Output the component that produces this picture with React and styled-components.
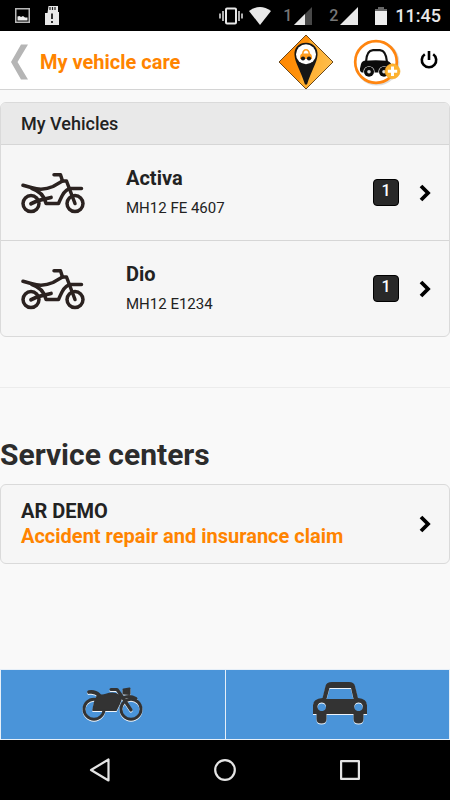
import React from "react";
import styled, { createGlobalStyle } from "styled-components";

const GlobalStyle = createGlobalStyle`
  *, *::before, *::after { box-sizing: border-box; }
  body {
    margin: 0;
    background: #f9f9f9;
    color: #222;
    font-family: Roboto, "Liberation Sans", sans-serif;
  }
  h1, h2, h3, p, ul { margin: 0; padding: 0; }
  button { border: 0; padding: 0; margin: 0; background: none; font: inherit; color: inherit; cursor: pointer; }
  a { color: inherit; text-decoration: none; }
  svg { display: block; flex: none; }
`;

const Screen = styled.div`
  display: flex;
  flex-direction: column;
  min-height: 100vh;
`;

const StatusBar = styled.div`
  display: flex;
  align-items: center;
  height: 31px;
  padding: 0 9px 0 15px;
  background: #000;
  color: #e8e8e8;
`;

const Notices = styled.div`
  display: flex;
  align-items: center;
  gap: 15px;
  margin-right: auto;
`;

const SystemIcons = styled.div`
  display: flex;
  align-items: center;
  gap: 6px;
`;

const Sim = styled.span`
  display: flex;
  align-items: center;
  gap: 2px;
  margin-left: 6px;
  margin-right: 5px;
  color: #777;
  font-size: 16px;
  line-height: 20px;
  font-weight: 500;
`;

const Battery = styled.span`
  margin-left: 6px;
`;

const Clock = styled.time`
  margin-left: 2px;
  font-size: 18px;
  line-height: 24px;
  font-weight: 500;
`;

const Header = styled.header`
  display: flex;
  align-items: center;
  height: 59px;
  padding: 3px 12px 0 10px;
  background: #fff;
  border-bottom: 1px solid #d4d4d4;
`;

const Title = styled.h1`
  margin: 0 auto 0 12px;
  color: #ff8400;
  font-size: 20px;
  line-height: 26px;
  font-weight: 700;
`;

const HeaderActions = styled.div`
  display: flex;
  align-items: center;
  gap: 19px;
`;

const Main = styled.main`
  flex: 1;
  padding-top: 12px;
`;

const Card = styled.section`
  overflow: hidden;
  border: 1px solid #dadada;
  border-radius: 6px;
  background: #f6f6f6;
`;

const CardTitle = styled.h2`
  padding: 0 20px;
  background: #e9e9e9;
  font-size: 18px;
  line-height: 41px;
  font-weight: 500;
`;

const VehicleList = styled.ul`
  list-style: none;
`;

const VehicleLink = styled.a`
  display: flex;
  align-items: center;
  height: 96px;
  padding: 0 18px 0 20px;
  border-top: 1px solid #d6d6d6;
`;

const VehicleText = styled.div`
  flex: 1;
  margin-left: 41px;
`;

const Name = styled.h3`
  font-size: 20px;
  line-height: 25px;
  font-weight: 700;
`;

const Plate = styled.p`
  margin-top: 6px;
  font-size: 15px;
  line-height: 22px;
  font-weight: 400;
  color: #222;
`;

const Count = styled.span`
  width: 26px;
  height: 27px;
  margin-right: 20px;
  border: 1px solid #000;
  border-radius: 4px;
  background: #292929;
  color: #fff;
  font-size: 16px;
  line-height: 22px;
  font-weight: 500;
  text-align: center;
`;

const Divider = styled.hr`
  margin: 50px 0;
  border: 0;
  border-top: 1px solid #ececec;
`;

const SectionTitle = styled.h2`
  margin-bottom: 12px;
  color: #2c2c2c;
  font-size: 30px;
  line-height: 34px;
  font-weight: 700;
`;

const CenterLink = styled.a`
  display: flex;
  align-items: center;
  justify-content: space-between;
  min-height: 78px;
  padding: 14px 18px 14px 20px;
`;

const CenterDetail = styled.p`
  color: #ff8400;
  font-size: 20px;
  line-height: 25px;
  font-weight: 700;
`;

const Tabs = styled.nav`
  display: grid;
  grid-template-columns: 1fr 1fr;
  gap: 1px;
  height: 71px;
  padding: 1px;
  background: #e6eff8;
`;

const Tab = styled.button`
  display: flex;
  align-items: center;
  justify-content: center;
  background: #4a94d9;

  svg { filter: drop-shadow(0 1px 0 #eef4fa); }
`;

const SystemNav = styled.nav`
  display: grid;
  grid-template-columns: repeat(3, 125px);
  justify-content: center;
  height: 60px;
  background: #000;
`;

const NavButton = styled.button`
  display: flex;
  align-items: center;
  justify-content: center;
`;

const Signal = ({ weak }) => (
  <svg width="18" height="18" viewBox="0 0 18 18" aria-hidden="true">
    <path d="M18 0V18H0Z" fill={weak ? "#484848" : "#e8e8e8"} />
    {weak && <path d="M11 7V18H0Z" fill="#e8e8e8" />}
  </svg>
);

const DirtBike = () => (
  <svg width="64" height="42" viewBox="0 0 64 42" fill="none" stroke="#2b2220" strokeWidth="3.5" strokeLinecap="round" strokeLinejoin="round" aria-hidden="true">
    <circle cx="10" cy="31.6" r="8" />
    <circle cx="54" cy="31.6" r="8" />
    <path d="M33 2.7H39.5L41.5 9L32 14.5Q22 19 11 15.8L2 13.2" />
    <path d="M41 9H45.5L54 31.5" />
    <path d="M11 16.5Q23 20.5 25 31.5H37.5Q39 28 41 24Q45 16.8 50 16.6L60.5 16.6" />
    <path d="M10 31.8L17 28.6L30 25.5" strokeWidth="3.8" />
  </svg>
);

const Motorcycle = () => (
  <svg width="61" height="35" viewBox="0 0 61 35" fill="none" stroke="#333" strokeWidth="3.2" strokeLinecap="round" strokeLinejoin="round" aria-hidden="true">
    <circle cx="12" cy="22.2" r="10" strokeWidth="2.9" />
    <circle cx="49" cy="22.2" r="10" strokeWidth="2.9" />
    <path d="M7 5Q13 4 17 8" strokeWidth="3.8" />
    <path d="M16 7.5Q20 9 24 7.5Q30 5.5 34 7L40 9.5Q38 16 34 23.3H11Q12 15 16 7.5Z" fill="#333" strokeWidth="1.6" />
    <path d="M29 2.5H35L39 8L49 23" />
    <path d="M41.5 2.5L47.5 1.5V7L41.5 6.5Z" fill="#333" strokeWidth="2" />
    <path d="M42 10.5Q48 8 54 11.5" strokeWidth="3" />
  </svg>
);

const CarFront = () => (
  <svg width="59" height="47" viewBox="-5 0 59 47" aria-hidden="true">
    <path
      fill="#333"
      fillRule="evenodd"
      d="M19 1H36Q41 1 42 5L45 17Q54 18 54 24V33H50.5V38Q50.5 42.5 45.5 42.5Q40.5 42.5 40.5 38V33H13.5V38Q13.5 42.5 8.5 42.5Q3.5 42.5 3.5 38V33H0V24Q0 18 9.5 17L12.5 5Q13.5 1 19 1ZM16.5 7L13.5 18H40.5L38 7ZM8.7 21.5a4.3 4.3 0 1 0 .1 0ZM45.5 21.5a4.3 4.3 0 1 0 .1 0Z"
    />
  </svg>
);

const SignPin = () => (
  <svg width="56" height="56" viewBox="0 0 56 56" aria-hidden="true">
    <defs>
      <linearGradient id="sign" x1="0" y1="0" x2="1" y2="0.25">
        <stop offset="0" stopColor="#ff8500" />
        <stop offset="0.54" stopColor="#ff920c" />
        <stop offset="0.58" stopColor="#ffac2c" />
        <stop offset="1" stopColor="#ffbc48" />
      </linearGradient>
    </defs>
    <path d="M28 1L55 28L28 55L1 28Z" fill="url(#sign)" stroke="#6b481c" strokeWidth="1" strokeLinejoin="round" />
    <path d="M28 8.8C36 8.8 40 14.5 39.5 21C39 29 33.5 36 29 50.5H27C22.5 36 17 29 16.5 21C16 14.5 20 8.8 28 8.8Z" fill="#161616" />
    <circle cx="28" cy="20.3" r="10" fill="#fff" />
    <path d="M22 23Q22 20 24 19.5Q24.5 15 28 15Q31.5 15 32 19.5Q34 20 34 23V25H22Z" fill="#ff9c1c" />
    <path d="M25.5 19.5Q26 16.5 28 16.5Q30 16.5 30.5 19.5Z" fill="#fff" />
    <circle cx="25" cy="24.5" r="2.1" fill="#161616" />
    <circle cx="31" cy="24.5" r="2.1" fill="#161616" />
  </svg>
);

const AddCar = () => (
  <svg width="48" height="48" viewBox="0 0 48 48" aria-hidden="true">
    <circle cx="24" cy="25" r="21" fill="none" stroke="#ddd" strokeWidth="3" />
    <circle cx="23" cy="24" r="20.8" fill="#fff" stroke="#ff850f" strokeWidth="2.7" />
    <path d="M13 24Q13.5 12.5 20 12.2H27Q33 12.5 34 24" fill="none" stroke="#111" strokeWidth="2.2" />
    <path d="M11 22.8Q23 21.8 34 22.8Q39 24.5 39 29V34.5H9Q6.5 33.5 7 30.5L8 26Q8.5 23.5 11 22.8Z" fill="#0b0b0b" />
    <circle cx="16" cy="33.8" r="5.6" fill="#fff" />
    <circle cx="16" cy="33.8" r="5" fill="#0b0b0b" />
    <circle cx="16" cy="33.8" r="1.8" fill="#ddd" />
    <circle cx="31" cy="33.8" r="5.6" fill="#fff" />
    <circle cx="31" cy="33.8" r="5" fill="#0b0b0b" />
    <circle cx="31" cy="33.8" r="1.8" fill="#ddd" />
    <circle cx="39.5" cy="33.3" r="7.5" fill="#fdb22e" stroke="#f5a623" strokeWidth="0.6" />
    <path d="M39.5 28.5V38M34.8 33.3H44.2" stroke="#fff" strokeWidth="3" />
  </svg>
);

const Chevron = () => (
  <svg width="12" height="18" viewBox="0 0 12 18" fill="none" stroke="#000" strokeWidth="3.8" aria-hidden="true">
    <path d="M2 2L9 9L2 16" />
  </svg>
);

const vehicles = [
  { name: "Activa", plate: "MH12 FE 4607", count: 1 },
  { name: "Dio", plate: "MH12 E1234", count: 1 },
];

export default function App() {
  return (
    <Screen>
      <GlobalStyle />
      <StatusBar>
        <Notices>
          <svg width="15" height="15" viewBox="0 0 15 15" aria-hidden="true">
            <rect x="0.75" y="0.75" width="13.5" height="13.5" fill="none" stroke="#b8b8b8" strokeWidth="1.5" />
            <path d="M2.5 12.5V8.5L4.5 8L6 9L8 8L10 9.5H12.5V12.5Z" fill="#eee" />
          </svg>
          <svg width="14" height="19" viewBox="0 0 14 19" aria-hidden="true">
            <path d="M3.5 0H13V6H14V19H0V7H2.5Z" fill="#e8e8e8" />
            <path d="M5 1V4M7.5 1V4M10 1V4" stroke="#222" strokeWidth="1.2" />
            <path d="M7 7.5V13M7 15V17" stroke="#000" strokeWidth="1.6" />
          </svg>
        </Notices>
        <SystemIcons>
          <svg width="24" height="18" viewBox="0 0 24 18" fill="none" stroke="#e8e8e8" aria-hidden="true">
            <rect x="7" y="1.5" width="10" height="15" rx="1" strokeWidth="2" />
            <path d="M4 4V14M20 4V14" strokeWidth="1.5" />
            <path d="M1 6.5V11.5M23 6.5V11.5" strokeWidth="1.5" />
          </svg>
          <svg width="22" height="18" viewBox="0 0 22 18" aria-hidden="true">
            <path d="M0 4Q11 -4 22 4L11 18Z" fill="#e8e8e8" />
          </svg>
          <Sim>1 <Signal weak /></Sim>
          <Sim>2 <Signal /></Sim>
          <Battery>
            <svg width="12" height="18" viewBox="0 0 12 18" aria-hidden="true">
              <path d="M3 0H9V2H12V5H0V2H3Z" fill="#666" />
              <path d="M0 4H12V18H0Z" fill="#eee" />
            </svg>
          </Battery>
          <Clock>11:45</Clock>
        </SystemIcons>
      </StatusBar>

      <Header>
        <button type="button" aria-label="Back">
          <svg width="18" height="36" viewBox="0 0 18 36" aria-hidden="true">
            <path d="M11 0.5H18L7.5 18L18 35.5H11L1 18Z" fill="#b5b5b5" />
          </svg>
        </button>
        <Title>My vehicle care</Title>
        <HeaderActions>
          <button type="button" aria-label="Locate vehicle"><SignPin /></button>
          <button type="button" aria-label="Add vehicle"><AddCar /></button>
          <button type="button" aria-label="Log out">
            <svg width="18" height="24" viewBox="0 0 18 24" fill="none" stroke="#000" strokeWidth="2.6" aria-hidden="true">
              <path d="M4.8 4.2A7.2 7.2 0 1 0 13.2 4.2M9 1V10" />
            </svg>
          </button>
        </HeaderActions>
      </Header>

      <Main>
        <Card>
          <CardTitle>My Vehicles</CardTitle>
          <VehicleList>
            {vehicles.map((v) => (
              <li key={v.name}>
                <VehicleLink href="#">
                  <DirtBike />
                  <VehicleText>
                    <Name>{v.name}</Name>
                    <Plate>{v.plate}</Plate>
                  </VehicleText>
                  <Count>{v.count}</Count>
                  <Chevron />
                </VehicleLink>
              </li>
            ))}
          </VehicleList>
        </Card>

        <Divider />

        <SectionTitle>Service centers</SectionTitle>
        <Card>
          <CenterLink href="#">
            <div>
              <Name>AR DEMO</Name>
              <CenterDetail>Accident repair and insurance claim</CenterDetail>
            </div>
            <Chevron />
          </CenterLink>
        </Card>
      </Main>

      <Tabs>
        <Tab type="button" aria-label="Two wheelers"><Motorcycle /></Tab>
        <Tab type="button" aria-label="Cars"><CarFront /></Tab>
      </Tabs>

      <SystemNav>
        <NavButton type="button" aria-label="Back">
          <svg width="22" height="24" viewBox="0 0 22 24" fill="none" stroke="#e4e4e4" strokeWidth="2.2" strokeLinejoin="round" aria-hidden="true">
            <path d="M19.5 1.5V22.5L2 12Z" />
          </svg>
        </NavButton>
        <NavButton type="button" aria-label="Home">
          <svg width="22" height="22" viewBox="0 0 22 22" fill="none" stroke="#e4e4e4" strokeWidth="2.2" aria-hidden="true">
            <circle cx="11" cy="11" r="9.8" />
          </svg>
        </NavButton>
        <NavButton type="button" aria-label="Recent apps">
          <svg width="20" height="20" viewBox="0 0 20 20" fill="none" stroke="#e4e4e4" strokeWidth="2.2" strokeLinejoin="round" aria-hidden="true">
            <rect x="1.1" y="1.1" width="17.8" height="17.8" />
          </svg>
        </NavButton>
      </SystemNav>
    </Screen>
  );
}
